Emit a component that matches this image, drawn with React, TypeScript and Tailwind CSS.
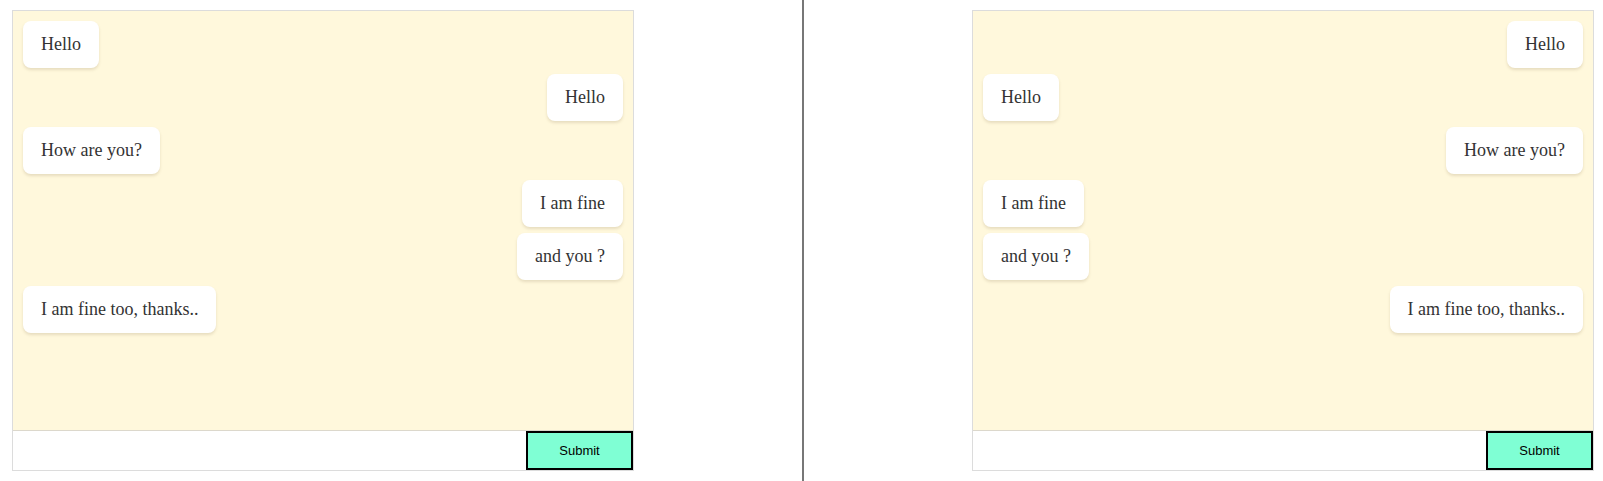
import React from "react";

type Msg = { text: string; side: "l" | "r" };

const msgs: Msg[] = [
  { text: "Hello", side: "l" },
  { text: "Hello", side: "r" },
  { text: "How are you?", side: "l" },
  { text: "I am fine", side: "r" },
  { text: "and you ?", side: "r" },
  { text: "I am fine too, thanks..", side: "l" },
];

function Panel({ mirror }: { mirror: boolean }) {
  return (
    <div className="w-[622px] border border-[#dcdcdc] flex flex-col">
      <div className="h-[420px] bg-[#fff8dc] border-b border-[#dcd8cc] p-[10px] flex flex-col gap-[6px]">
        {msgs.map((m, i) => {
          const left = mirror ? m.side === "r" : m.side === "l";
          return (
            <div
              key={i}
              className={`${left ? "self-start" : "self-end"} bg-white rounded-[8px] px-[18px] py-[13px] text-[18px] leading-[21px] text-[#333] shadow-[0_2px_3px_rgba(120,100,60,0.18)]`}
              style={{ fontFamily: '"Liberation Serif", "Times New Roman", serif' }}
            >
              {m.text}
            </div>
          );
        })}
      </div>
      <div className="flex h-[39px] bg-white">
        <input className="flex-1 outline-none bg-white" />
        <button
          className="w-[107px] h-full bg-[#7fffd4] border-2 border-black text-[13px] text-black"
          style={{ fontFamily: '"Liberation Sans", Arial, sans-serif' }}
        >
          Submit
        </button>
      </div>
    </div>
  );
}

export default function App() {
  return (
    <div className="flex w-[1603px] h-[481px] bg-white">
      <div className="w-[804px] h-full border-r-2 border-[#777] pl-[12px] pt-[10px] flex items-start">
        <Panel mirror={false} />
      </div>
      <div className="flex-1 h-full flex justify-end items-start pr-[9px] pt-[10px]">
        <Panel mirror={true} />
      </div>
    </div>
  );
}
